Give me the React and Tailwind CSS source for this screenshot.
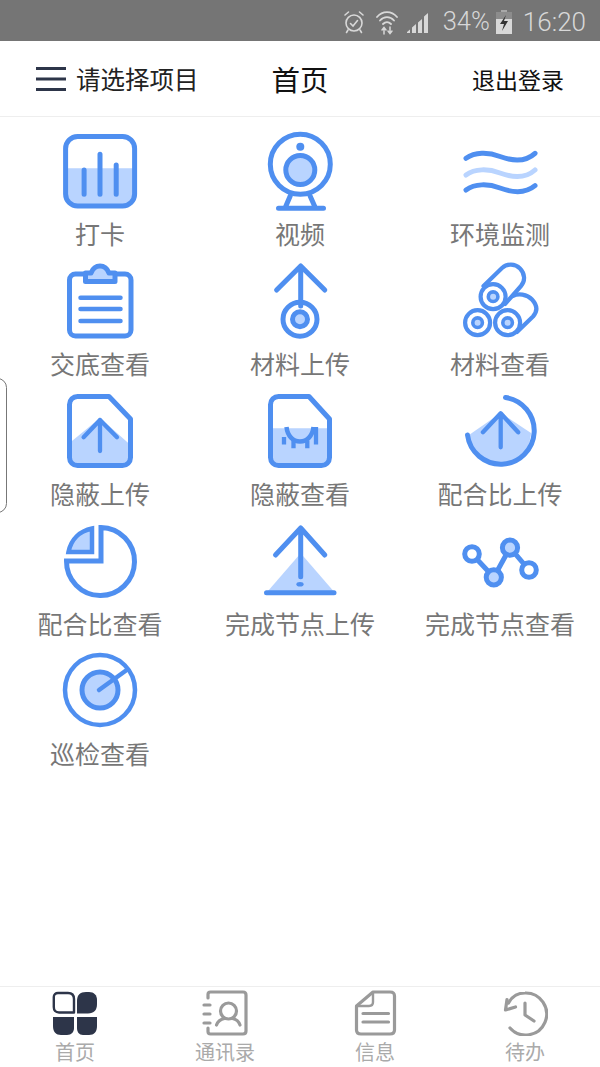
import React from "react";

const BLUE = "#4f8ff0";
const LIGHT = "#b9d4ff";
const cjk = "font-['Noto_Sans_CJK_SC','Noto_Sans',sans-serif]";

const Icon = ({ children }) => (
  <svg viewBox="0 0 80 80" className="w-20 h-20 shrink-0" fill="none" stroke={BLUE} strokeWidth="5" strokeLinecap="round" strokeLinejoin="round">
    {children}
  </svg>
);

const icons = {
  clock: (
    <Icon>
      <path d="M5.6 37.3H74.6V63a12 12 0 0 1-12 12H17.6a12 12 0 0 1-12-12Z" fill={LIGHT} stroke="none" />
      <rect x="5.6" y="5.5" width="69" height="69.6" rx="12" />
      <path d="M24.1 39V63.3M40 23.3V63.3M56.2 34V63.3" />
    </Icon>
  ),
  video: (
    <Icon>
      <circle cx="40.3" cy="33.3" r="30" />
      <circle cx="40.3" cy="15.7" r="4" fill={BLUE} stroke="none" />
      <circle cx="40.3" cy="39" r="14.5" fill={LIGHT} />
      <path d="M30.3 64.7 25.5 76M50 64.7 55 76M18.5 77.3H63.5" />
    </Icon>
  ),
  waves: (
    <Icon>
      <path d="M6 27.3C15 21 28 21 40 25.5S65 31.5 75 22.3" />
      <path d="M6 44C15 37.5 28 37.5 40 42S65 48 75 39" stroke={LIGHT} />
      <path d="M6 59C15 52.5 28 52.5 40 57S65 63 75 54.7" />
    </Icon>
  ),
  clipboard: (
    <Icon>
      <rect x="9.5" y="13" width="61.5" height="62" rx="6" />
      <path d="M25.5 20.5V12H31C33 7 36.5 5 40 5S47 7 49 12H55V20.5Z" fill={LIGHT} />
      <path d="M20.5 36.7H60.5M20.5 48H60.5M20.5 60H60.5" strokeWidth="4.5" />
    </Icon>
  ),
  upload: (
    <Icon>
      <path d="M16.6 29 40.7 5 64.8 29M40.7 5V45" />
      <circle cx="40" cy="58.3" r="17" />
      <circle cx="40" cy="58.3" r="7.5" fill={LIGHT} />
    </Icon>
  ),
  rolls: (
    <Icon>
      <path d="M23.5 25 42 7C47 2.5 55 2.5 60 7.5S65.5 20 61 25L45 43" strokeWidth="4.2" />
      <path d="M53 35C58 32 67 33 72 38.5S78 50 73 55.5L57 71" strokeWidth="4.2" />
      <circle cx="33.1" cy="35.7" r="12.5" fill="#fff" strokeWidth="4.2" />
      <circle cx="33.1" cy="35.7" r="4.8" fill={LIGHT} strokeWidth="3.6" />
      <circle cx="17.6" cy="61.7" r="12.5" fill="#fff" strokeWidth="4.2" />
      <circle cx="17.6" cy="61.7" r="4.8" fill={LIGHT} strokeWidth="3.6" />
      <circle cx="47.6" cy="61.7" r="12.5" fill="#fff" strokeWidth="4.2" />
      <circle cx="47.6" cy="61.7" r="4.8" fill={LIGHT} strokeWidth="3.6" />
    </Icon>
  ),
  fileUp: (
    <Icon>
      <path d="M9.5 52 40 27 70.5 54V66a8 8 0 0 1-8 8.5H17.5a8 8 0 0 1-8-8.5Z" fill={LIGHT} stroke="none" />
      <path d="M17.5 5.5H49L70.5 28V66.5a8 8 0 0 1-8 8H17.5a8 8 0 0 1-8-8V13.5a8 8 0 0 1 8-8Z" />
      <path d="M23.6 46.3 40 29 57 46.3M40 29V60" strokeWidth="4.3" />
    </Icon>
  ),
  fileEye: (
    <Icon>
      <path d="M10.5 37.3H69.5V66a8 8 0 0 1-8 8.5H18.5a8 8 0 0 1-8-8.5Z" fill={LIGHT} stroke="none" />
      <path d="M18.5 5.5H49L69.5 28V66.5a8 8 0 0 1-8 8H18.5a8 8 0 0 1-8-8V13.5a8 8 0 0 1 8-8Z" />
      <path d="M26.5 36C27.5 45 33 50.5 40 50.5S52.5 45 53.5 36" strokeWidth="4.5" strokeLinecap="butt" />
      <path d="M24 46V53.5M56 46V53.5M56 36V53.5M33.5 49.5V57.3M47.3 49.5V57.3" strokeWidth="4.3" strokeLinecap="butt" />
    </Icon>
  ),
  circleUp: (
    <Icon>
      <path d="M9 44 40.7 22 71 42C70 60 56 74 40.7 74 24 74 11 61 9 44Z" fill={LIGHT} stroke="none" />
      <path d="M45.5 6.5A33.5 33.5 0 1 1 7.5 44" />
      <path d="M22.9 41.3 40.7 22.3 58.2 41.3M40.7 22.3V56.3" strokeWidth="4.3" />
    </Icon>
  ),
  pie: (
    <Icon>
      <path d="M41 6.5V40H6.5A34 34 0 1 0 41 6.5Z" strokeLinejoin="miter" />
      <path d="M32 7.5V31H8.5C11 18 20 10 32 7.5Z" fill={LIGHT} strokeWidth="4.5" strokeLinejoin="miter" />
    </Icon>
  ),
  triangle: (
    <Icon>
      <path d="M40.7 32.3 73.4 70H8Z" fill={LIGHT} stroke="none" />
      <path d="M15.5 34 40.7 7 64.8 34M40.7 7V55.7" />
      <ellipse cx="40" cy="63.3" rx="3.6" ry="2.3" fill={BLUE} stroke="none" />
      <path d="M6.5 71.7H74" />
    </Icon>
  ),
  nodes: (
    <Icon>
      <path d="M12 33 33.8 56.3 50 26.7 69 49" />
      <circle cx="12" cy="33" r="7.3" fill="#fff" />
      <circle cx="33.8" cy="56.3" r="7.6" fill={LIGHT} />
      <circle cx="50" cy="26.7" r="7.6" fill={LIGHT} />
      <circle cx="69" cy="49" r="7.3" fill="#fff" />
    </Icon>
  ),
  target: (
    <Icon>
      <circle cx="40" cy="39" r="35" strokeWidth="4.5" />
      <circle cx="40" cy="39" r="18" fill={LIGHT} />
      <path d="M39 39 66.7 19" strokeWidth="4.5" />
    </Icon>
  ),
};

const items = [
  ["打卡", icons.clock],
  ["视频", icons.video],
  ["环境监测", icons.waves],
  ["交底查看", icons.clipboard],
  ["材料上传", icons.upload],
  ["材料查看", icons.rolls],
  ["隐蔽上传", icons.fileUp],
  ["隐蔽查看", icons.fileEye],
  ["配合比上传", icons.circleUp],
  ["配合比查看", icons.pie],
  ["完成节点上传", icons.triangle],
  ["完成节点查看", icons.nodes],
  ["巡检查看", icons.target],
];

const TabIcon = ({ children }) => (
  <svg viewBox="0 0 46 46" className="w-[46px] h-[46px] shrink-0" fill="none" stroke="#9a9a9a" strokeWidth="3.2" strokeLinecap="round" strokeLinejoin="round">
    {children}
  </svg>
);

const tabs = [
  {
    label: "首页",
    icon: (
      <TabIcon>
        <path d="M6 3H16C20 3 22 5 22 9V22.5H7C3.5 22.5 1.8 20.5 1.8 17V7C1.8 4.5 3.5 3 6 3Z" stroke="#2d3549" strokeWidth="2.4" />
        <path d="M25 11C25 5 28 2 34 2H37C42 2 45 5 45 10V14C45 20 42 23.5 36 23.5H25Z" fill="#2d3549" stroke="none" />
        <path d="M1 27H22V38C22 42 19.5 45 15 45H9C4 45 1 42 1 36Z" fill="#2d3549" stroke="none" />
        <path d="M25 27H45V36C45 42 42 45 37 45H31C27 45 25 42 25 38Z" fill="#2d3549" stroke="none" />
      </TabIcon>
    ),
  },
  {
    label: "通讯录",
    icon: (
      <TabIcon>
        <path d="M6 8V4.5C6 3 7 2 8.5 2H41C43 2 44 3 44 5V41C44 43 43 44 41 44H8.5C7 44 6 43 6 41.5V38" />
        <path d="M2 15H8M2 24H8M2 33H8" />
        <circle cx="26.5" cy="21" r="8" />
        <path d="M14.5 35C16 30.5 20 29 22.5 28.5M38 35C36.5 30.5 33 29 30.5 28.5" />
      </TabIcon>
    ),
  },
  {
    label: "信息",
    icon: (
      <TabIcon>
        <path d="M21 2H38C41 2 42.5 3.5 42.5 6V40C42.5 42.5 41 44 38 44H9C6 44 4.5 42.5 4.5 40V16L21 2Z" />
        <path d="M6 16H17C19.5 16 21 14.5 21 12V3" strokeWidth="2.4" />
        <path d="M11 23.5H36.5M11 32H36.5" />
      </TabIcon>
    ),
  },
  {
    label: "待办",
    icon: (
      <TabIcon>
        <path d="M6.5 13C10 6.5 16 3 23 3A21 21 0 1 1 8 38" />
        <path d="M5 9.5 3.5 20 13.5 17" />
        <path d="M23 13V25L32 31" />
      </TabIcon>
    ),
  },
];

const StatusIcons = () => (
  <>
    <svg viewBox="0 0 22 24" className="w-[22px] h-6 ml-[-1px]" fill="none" stroke="#d8d8d8" strokeWidth="1.6" strokeLinecap="round">
      <circle cx="11" cy="13" r="8" />
      <path d="M7.5 13.5 10 16 14.5 10.5M2 5 5.5 2M20 5 16.5 2M5 20 3.5 22.5M17 20 18.5 22.5" />
    </svg>
    <svg viewBox="0 0 22 26" className="w-[22px] h-[26px] ml-[11px]" fill="none" stroke="#d8d8d8" strokeWidth="1.8" strokeLinecap="round">
      <path d="M1 8C6.5 1.5 15.5 1.5 21 8M4 11.5C8 7 14 7 18 11.5M7 15C9.5 12.5 12.5 12.5 15 15" />
      <path d="M8 25V19M6 21 8 18.5 10 21M14 18V24M12 22 14 24.5 16 22" strokeWidth="1.5" />
    </svg>
    <svg viewBox="0 0 22 22" className="w-[22px] h-[22px] ml-2" fill="#d8d8d8">
      <path d="M1 22H4V18.5L1 21ZM6 22H10V13L6 16.5ZM12 22H16V8L12 11.5ZM18 22H22V2L18 5.5Z" />
    </svg>
  </>
);

export default function App() {
  return (
    <div className={`relative flex flex-col w-[600px] h-[1067px] overflow-hidden bg-white ${cjk}`}>
      <div className="flex items-center justify-end h-[41px] shrink-0 bg-[#757575] pr-[14px] pt-[2px]">
        <StatusIcons />
        <span className="ml-[15px] font-['Roboto',sans-serif] font-light text-[25.5px] leading-none text-[#d8d8d8]">34%</span>
        <svg viewBox="0 0 16 24" className="w-4 h-6 ml-[6px]">
          <rect x="5" y="0" width="6" height="3" fill="#a8a8a8" />
          <rect x="0" y="2" width="16" height="22" fill="#d8d8d8" />
          <rect x="0" y="2" width="16" height="7" fill="#8c8c8c" />
          <path d="M10 5 4 14H8L6 21 12 11H8Z" fill="#333" />
        </svg>
        <span className="ml-[11px] font-['Roboto',sans-serif] font-light text-[26px] leading-none text-[#d8d8d8]">16:20</span>
      </div>

      <div className="grid grid-cols-3 items-center h-[76px] shrink-0 border-b border-[#eeeeee] text-[#222]">
        <div className="flex items-center pl-9 whitespace-nowrap">
          <svg viewBox="0 0 30 26" className="w-[30px] h-[26px]" fill="none" stroke="#2d3549" strokeWidth="3">
            <path d="M0 2.5H30M0 13H30M0 23.5H30" />
          </svg>
          <span className="ml-[10px] pt-[2px] text-[24.5px] leading-none">请选择项目</span>
        </div>
        <div className="text-center pt-[2px] text-[28.5px] leading-none text-[#111]">首页</div>
        <div className="text-right pr-9 pt-[2px] text-[23px] leading-none text-[#111]">退出登录</div>
      </div>

      <div className="flex-1 grid grid-cols-3 content-start pt-[14px]">
        {items.map(([label, icon]) => (
          <div key={label} className="flex flex-col items-center h-[130px]">
            {icon}
            <span className="text-[25px] leading-[45px] text-[#777] whitespace-nowrap">{label}</span>
          </div>
        ))}
      </div>

      <div className="grid grid-cols-4 h-[81px] shrink-0 border-t border-[#eeeeee] pt-[3px]">
        {tabs.map((tab) => (
          <div key={tab.label} className="flex flex-col items-center">
            {tab.icon}
            <span className="mt-[1px] text-[20px] leading-[30px] text-[#aaaaaa]">{tab.label}</span>
          </div>
        ))}
      </div>

      <div className="absolute left-[-12px] top-[378px] w-[19px] h-[135px] rounded-[10px] border border-[#777] bg-white" />
    </div>
  );
}
